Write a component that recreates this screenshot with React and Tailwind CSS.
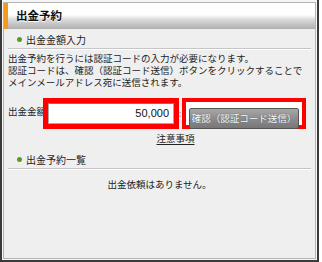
const font = { fontFamily: '"Noto Sans CJK JP", "Liberation Sans", sans-serif' };

const SectionTitle = ({ children }) => (
  <div className="mx-[4px] h-[18px] flex items-center gap-[4px] pl-[9px] border-b border-[#c6c6c6] shadow-[0_1px_0_#ffffff]">
    <span className="w-[5px] h-[5px] rounded-full bg-[#5d9a1c]"></span>
    <span className="text-[10px] leading-none text-[#222]">{children}</span>
  </div>
);

const App = () => {
  return (
    <div className="w-[322px] h-[262px] bg-white" style={font}>
      <div className="w-[319px] h-[262px] border-x-2 border-b-2 border-[#3a3a3a] bg-[#f6f6f6] pt-[2px] px-px pb-px">
        <div className="h-full border border-[#b4b4b4] bg-[#efefef]">
          <div className="h-[26px] flex items-center border-l-4 border-[#f39a1e] pl-[8px] bg-[linear-gradient(to_bottom,#ffffff_0%,#ffffff_45%,#d8d8d8_65%,#b0b0b0_100%)]">
            <span className="text-[11.5px] font-bold text-[#111] leading-none [text-shadow:0_1px_0_#fff]">出金予約</span>
          </div>

          <div className="mt-[2px]">
            <SectionTitle>出金金額入力</SectionTitle>
          </div>

          <div className="mt-[3px] px-[4px] text-[9.5px] leading-[12px] text-[#222] whitespace-nowrap">
            <p>出金予約を行うには認証コードの入力が必要になります。</p>
            <p>認証コードは、確認（認証コード送信）ボタンをクリックすることで</p>
            <p>メインメールアドレス宛に送信されます。</p>
          </div>

          <div className="mt-[10px] h-[31px] flex items-center pl-[4px]">
            <span className="whitespace-nowrap text-[9.5px] leading-none text-[#222] mb-[3px]">出金金額</span>
            <div className="relative -ml-[3px] w-[136px] h-[31px] border-[5px] border-[#ff0000] bg-white">
              <div className="h-full border border-[#a9a9a9] border-t-[#777] flex items-center justify-end pr-[4px] text-[11px] text-[#111] leading-none" style={{ fontFamily: '"Liberation Sans", sans-serif' }}>
                50,000
              </div>
            </div>
            <span className="w-[3px] text-[9px] text-[#999] leading-none">:</span>
            <div className="w-[124px] h-[31px] border-[4px] border-[#ff0000] bg-white px-[3px] py-[1px]">
              <button className="w-full h-full rounded-[2px] border border-[#555] bg-[linear-gradient(to_bottom,#a8a8a8_0%,#8c8c8c_50%,#777777_100%)] text-white text-[9.5px] leading-none whitespace-nowrap [text-shadow:0_0_1px_#444]">
                確認（認証コード送信）
              </button>
            </div>
          </div>

          <div className="mt-[3px] flex justify-center pl-[32px]">
            <a className="text-[9.5px] leading-[12px] text-[#222] underline underline-offset-2">注意事項</a>
          </div>

          <div className="mt-[7px]">
            <SectionTitle>出金予約一覧</SectionTitle>
          </div>

          <p className="mt-[9px] text-center text-[9.5px] leading-[12px] text-[#222]">出金依頼はありません。</p>
        </div>
      </div>
    </div>
  );
};

export default App;
